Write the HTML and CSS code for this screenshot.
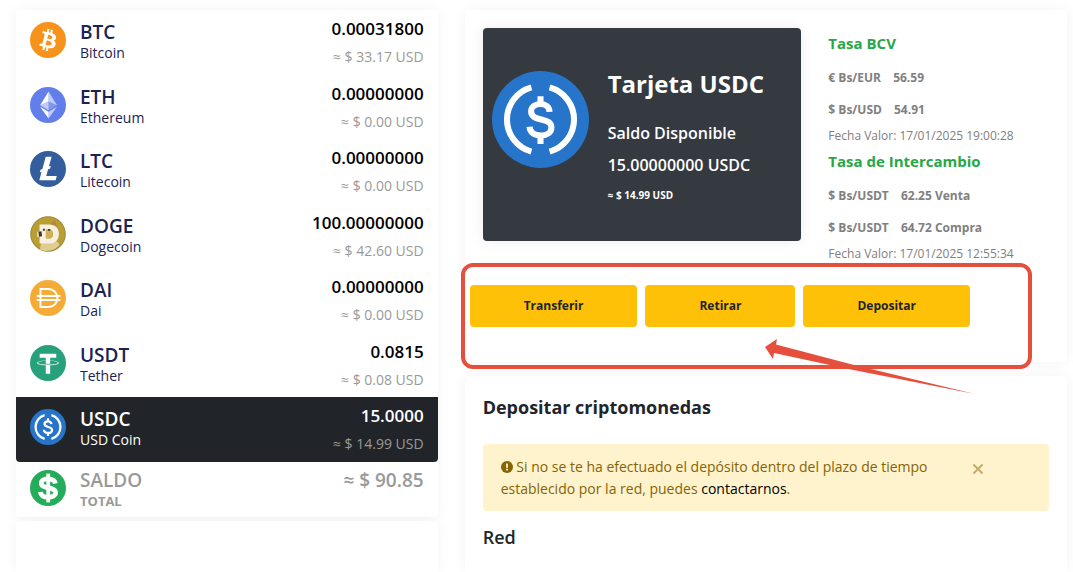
FILE: index.html
```html
<!DOCTYPE html>
<html lang="es">
<head>
  <meta charset="UTF-8" />
  <meta name="viewport" content="width=device-width, initial-scale=1" />
  <title>Billetera - USDC</title>
  <link rel="stylesheet" href="styles.css">
</head>
<body>
  <!-- shared USDC logo -->
  <svg class="sprite" aria-hidden="true">
    <symbol id="usdc" viewBox="0 0 32 32">
      <circle cx="16" cy="16" r="16" fill="#2775ca"/>
      <g fill="none" stroke="#fff" stroke-width="2">
        <path d="M13 5.4a11 11 0 0 0 0 21.2M19 5.4a11 11 0 0 1 0 21.2"/>
        <path d="M19 13.5c-.1-1.700-1.300-2.600-3-2.600s-3.100.9-3.100 2.500c0 3.500 6.700 1.700 6.700 5.200 0 1.700-1.500 2.700-3.500 2.700s-3.600-1-3.700-2.900M16 8.300v2.500M16 21.400v2.700"/>
      </g>
    </symbol>
  </svg>

  <main class="page">
    <div class="column">
      <section class="card wallet" aria-label="Saldos">
        <ul class="coins">
          <li>
            <a href="#" class="coin">
              <svg class="coin-icon" viewBox="0 0 32 32" aria-hidden="true">
                <circle cx="16" cy="16" r="16" fill="#f7931a"/>
                <path fill="#fff" fill-rule="evenodd" d="M23.189 14.02c.314-2.096-1.283-3.223-3.465-3.975l.708-2.840-1.728-.43-.69 2.765c-.454-.114-.92-.22-1.385-.326l.695-2.783L15.596 6l-.708 2.839c-.376-.086-.746-.17-1.104-.26l.002-.009-2.384-.595-.46 1.846s1.283.294 1.256.312c.7.175.826.638.805 1.006l-.806 3.235c.048.012.11.03.18.057l-.183-.045-1.130 4.532c-.086.212-.303.531-.793.41.018.025-1.256-.313-1.256-.313l-.858 1.978 2.250.561c.418.105.828.215 1.231.318l-.715 2.872 1.727.43.708-2.840c.472.127.93.245 1.378.357l-.706 2.828 1.728.43.715-2.866c2.948.558 5.164.333 6.097-2.333.752-2.146-.037-3.385-1.588-4.192 1.130-.26 1.980-1.003 2.207-2.538zm-3.950 5.538c-.533 2.147-4.148.986-5.320.695l.95-3.805c1.172.293 4.929.872 4.370 3.110zm.535-5.569c-.487 1.953-3.495.96-4.470.717l.86-3.450c.975.243 4.118.696 3.610 2.733z"/>
              </svg>
              <span class="coin-name"><strong>BTC</strong><span>Bitcoin</span></span>
              <span class="coin-value"><strong>0.00031800</strong><span>≈ $ 33.17 USD</span></span>
            </a>
          </li>
          <li>
            <a href="#" class="coin">
              <svg class="coin-icon" viewBox="0 0 32 32" aria-hidden="true">
                <circle cx="16" cy="16" r="16" fill="#627eea"/>
                <g fill="#fff">
                  <path fill-opacity=".6" d="M16.500 4v8.870l7.500 3.350z"/>
                  <path d="M16.500 4L9 16.220l7.500-3.350z"/>
                  <path fill-opacity=".6" d="M16.500 21.970V28L24 17.620z"/>
                  <path d="M16.500 28v-6.030L9 17.620z"/>
                  <path fill-opacity=".2" d="M16.500 20.570l7.500-4.350-7.500-3.350z"/>
                  <path fill-opacity=".6" d="M9 16.220l7.500 4.350v-7.700z"/>
                </g>
              </svg>
              <span class="coin-name"><strong>ETH</strong><span>Ethereum</span></span>
              <span class="coin-value"><strong>0.00000000</strong><span>≈ $ 0.00 USD</span></span>
            </a>
          </li>
          <li>
            <a href="#" class="coin">
              <svg class="coin-icon" viewBox="0 0 32 32" aria-hidden="true">
                <circle cx="16" cy="16" r="16" fill="#345d9d"/>
                <path fill="#fff" d="M10.300 18.500l-1.600.6.7-2.500 1.600-.6L14 5.200h5.200l-2.400 8.600 1.700-.6-.7 2.500-1.700.6-1.700 5.900h9.400L22.800 26H8.300z"/>
              </svg>
              <span class="coin-name"><strong>LTC</strong><span>Litecoin</span></span>
              <span class="coin-value"><strong>0.00000000</strong><span>≈ $ 0.00 USD</span></span>
            </a>
          </li>
          <li>
            <a href="#" class="coin">
              <svg class="coin-icon" viewBox="0 0 32 32" aria-hidden="true">
                <circle cx="16" cy="16" r="15.300" fill="#b99f33" stroke="#a08a3c"/>
                <path fill="#e0cd92" d="M9 30c0-4 1-7 4-8h8c3 0 5 2 5 4a15 15 0 0 1-17 4z"/>
                <path fill="#b9853f" d="M18 7l4-4 2 6 1 5-5-4z"/>
                <path fill="#cdb353" d="M10 9h10v14H10z"/>
                <path fill="#f6efe2" fill-rule="evenodd" d="M8.500 7.500H17c5.500 0 8.700 3.300 8.700 8.500s-3.200 8.500-8.700 8.500H8.500v-6h-2v-4.500h2zm5.500 4.300v8.400h2.500c3 0 4-1.700 4-4.200s-1-4.200-4-4.200z"/>
                <path fill="#3f3524" d="M7.500 14l2.700-.5.5 4.500-2.700.5zM11.500 11.300h1.700v1.700h-1.700zM16 11.500h2v1.700h-2z"/>
              </svg>
              <span class="coin-name"><strong>DOGE</strong><span>Dogecoin</span></span>
              <span class="coin-value"><strong>100.00000000</strong><span>≈ $ 42.60 USD</span></span>
            </a>
          </li>
          <li>
            <a href="#" class="coin">
              <svg class="coin-icon" viewBox="0 0 32 32" aria-hidden="true">
                <circle cx="16" cy="16" r="16" fill="#f5ac37"/>
                <path fill="none" stroke="#fff" stroke-width="1.700" d="M9.300 8h6.500c5.500 0 8.500 3.600 8.500 8s-3 8-8.500 8H9.300zM6 14.200h21M6 17.800h21"/>
              </svg>
              <span class="coin-name"><strong>DAI</strong><span>Dai</span></span>
              <span class="coin-value"><strong>0.00000000</strong><span>≈ $ 0.00 USD</span></span>
            </a>
          </li>
          <li>
            <a href="#" class="coin">
              <svg class="coin-icon" viewBox="0 0 32 32" aria-hidden="true">
                <circle cx="16" cy="16" r="16" fill="#26a17b"/>
                <path fill="#fff" d="M17.922 17.383v-.002c-.11.008-.677.042-1.942.042-1.010 0-1.721-.03-1.971-.042v.003c-3.888-.171-6.790-.848-6.790-1.658 0-.809 2.902-1.486 6.790-1.660v2.644c.254.018.982.061 1.988.061 1.207 0 1.812-.05 1.925-.06v-2.643c3.880.173 6.775.85 6.775 1.658 0 .81-2.895 1.485-6.775 1.657m0-3.590v-2.366h5.414V7.819H8.595v3.608h5.414v2.365c-4.400.202-7.709 1.074-7.709 2.118 0 1.044 3.309 1.915 7.709 2.118v7.582h3.913v-7.584c4.393-.202 7.694-1.073 7.694-2.116 0-1.043-3.301-1.914-7.694-2.117"/>
              </svg>
              <span class="coin-name"><strong>USDT</strong><span>Tether</span></span>
              <span class="coin-value"><strong>0.0815</strong><span>≈ $ 0.08 USD</span></span>
            </a>
          </li>
          <li>
            <a href="#" class="coin active" aria-current="true">
              <svg class="coin-icon" aria-hidden="true"><use href="#usdc"/></svg>
              <span class="coin-name"><strong>USDC</strong><span>USD Coin</span></span>
              <span class="coin-value"><strong>15.0000</strong><span>≈ $ 14.99 USD</span></span>
            </a>
          </li>
        </ul>
        <div class="total">
          <svg class="coin-icon" viewBox="0 0 32 32" aria-hidden="true">
            <circle cx="16" cy="16" r="16" fill="#23ad5b"/>
            <path fill="none" stroke="#fff" stroke-width="4.200" d="M22.600 12c-.5-2.600-3-4.100-6.600-4.100-3.500 0-6 1.400-6 3.900 0 5.600 12.800 2.500 12.800 8.300 0 2.600-2.700 4.100-6.500 4.100-4 0-6.700-1.700-7.100-4.700"/>
            <path stroke="#fff" stroke-width="3.400" d="M16.200 3.200v25.600"/>
          </svg>
          <span class="coin-name"><strong>SALDO</strong><b>TOTAL</b></span>
          <span class="total-value">≈ $ 90.85</span>
        </div>
      </section>
      <section class="card rest"></section>
    </div>

    <div class="column">
      <section class="card account">
        <div class="overview">
          <div class="usdc-card">
            <svg class="usdc-logo" aria-hidden="true"><use href="#usdc"/></svg>
            <div>
              <h1>Tarjeta USDC</h1>
              <p>Saldo Disponible</p>
              <p>15.00000000 USDC</p>
              <small>≈ $ 14.99 USD</small>
            </div>
          </div>
          <div class="rates">
            <h2>Tasa BCV</h2>
            <p>€ Bs/EUR <span>56.59</span></p>
            <p>$ Bs/USD <span>54.91</span></p>
            <small>Fecha Valor: 17/01/2025 19:00:28</small>
            <h2>Tasa de Intercambio</h2>
            <p>$ Bs/USDT <span>62.25 Venta</span></p>
            <p>$ Bs/USDT <span>64.72 Compra</span></p>
            <small>Fecha Valor: 17/01/2025 12:55:34</small>
          </div>
        </div>
        <div class="actions">
          <button type="button" class="btn">Transferir</button>
          <button type="button" class="btn">Retirar</button>
          <button type="button" class="btn">Depositar</button>
        </div>
        <div class="highlight"></div>
        <svg class="arrow" viewBox="0 0 212 56" aria-hidden="true">
          <path fill="#e54f3b" d="M0 8L12 0l-1 5.500 76 20L210 55 86 30.500 9 14l-1 6z"/>
        </svg>
      </section>

      <section class="card rest deposit">
        <h2>Depositar criptomonedas</h2>
        <div class="alert" role="alert">
          <p>
            <svg class="alert-icon" viewBox="0 0 12 12" aria-hidden="true">
              <circle cx="6" cy="6" r="6" fill="#856404"/>
              <path stroke="#fff3cd" stroke-width="1.800" d="M6 2.500v4.200M6 7.800v1.800"/>
            </svg>
            Si no se te ha efectuado el depósito dentro del plazo de tiempo establecido por la red, puedes <a href="#">contactarnos</a>.
          </p>
          <button type="button" class="close" aria-label="Cerrar">
            <svg viewBox="0 0 10 10" aria-hidden="true"><path stroke="#c2ad69" stroke-width="2" d="M.5.5l9 9M9.500.5l-9 9"/></svg>
          </button>
        </div>
        <h3>Red</h3>
      </section>
    </div>
  </main>
</body>
</html>
```
FILE: styles.css
```css
* {
  margin: 0;
  padding: 0;
  box-sizing: border-box;
}

body {
  font-family: 'Segoe UI', 'Open Sans', 'Noto Sans', sans-serif;
  font-size: 14px;
  background-color: #fff;
  color: #212529;
}

.sprite {
  display: none;
}

.page {
  display: grid;
  grid-template-columns: 7fr 10fr;
  gap: 27px;
  min-height: 100vh;
  padding: 10px 6px 0 16px;
}

.column {
  display: flex;
  flex-direction: column;
  gap: 14px;
}

.column:first-child {
  gap: 4px;
}

.card {
  background-color: #fff;
  border-radius: 4px;
  box-shadow: 0 0 14px rgba(0, 0, 0, 0.05);
}

.rest {
  flex-grow: 1;
  border-radius: 4px 4px 0 0;
}

/* Coin list */
.coins {
  display: grid;
  grid-auto-rows: 1fr;
  min-height: 452px;
  list-style: none;
}

.coin,
.total {
  display: flex;
  gap: 14px;
  height: 100%;
  padding: 12px 14px 0;
  color: #1b2254;
  text-decoration: none;
}

.coin.active {
  background-color: #212529;
  border-radius: 0 0 4px 4px;
  color: #fff;
}

.coin-icon {
  width: 36px;
  height: 36px;
  flex-shrink: 0;
}

.coin-name {
  display: flex;
  flex-direction: column;
  flex-grow: 1;
  line-height: 22px;
}

.coin-name strong {
  font-size: 19px;
  font-weight: 600;
  line-height: 20px;
}

.coin-name b {
  font-size: 13px;
}

.coin-value {
  display: flex;
  flex-direction: column;
  gap: 9px;
  margin-top: -2px;
  text-align: right;
}

.coin-value strong {
  color: #000;
  font-size: 17px;
  font-weight: 600;
  line-height: 18px;
}

.coin-value span {
  color: #999;
  line-height: 20px;
}

.active .coin-value strong {
  color: #fff;
}

.total {
  height: 55px;
  padding-top: 8px;
  color: #999;
}

.total-value {
  font-size: 19px;
  font-weight: 600;
  line-height: 20px;
}

/* Account */
.account {
  position: relative;
  padding: 18px 18px 35px;
}

.overview {
  display: grid;
  grid-template-columns: 13fr 9fr;
  gap: 27px;
  align-items: start;
}

.usdc-card {
  display: flex;
  gap: 19px;
  min-height: 213px;
  padding: 40px 9px 0;
  background-color: #343a40;
  border-radius: 4px;
  box-shadow: 0 0 14px rgba(0, 0, 0, 0.08);
  color: #fff;
}

.usdc-logo {
  width: 97px;
  height: 97px;
  margin-top: 3px;
  flex-shrink: 0;
}

.usdc-card h1 {
  margin-bottom: 17px;
  font-size: 24px;
  line-height: 32px;
  white-space: nowrap;
}

.usdc-card p {
  font-size: 16px;
  font-weight: 600;
  line-height: 32px;
}

.usdc-card small {
  display: block;
  font-size: 10px;
  font-weight: 700;
  line-height: 28px;
}

.rates {
  color: #808080;
}

.rates h2 {
  margin: 3px 0 7px;
  color: #28a745;
  font-size: 15px;
  line-height: 24px;
}

.rates p {
  font-size: 12px;
  font-weight: 700;
  line-height: 32px;
}

.rates p span {
  margin-left: 9px;
}

.rates small {
  display: block;
  font-size: 12px;
  line-height: 20px;
  white-space: nowrap;
}

.actions {
  display: flex;
  gap: 8px;
  margin: 21px 0 0 -13px;
}

.btn {
  padding: 0 54px;
  background-color: #ffc107;
  border: none;
  border-radius: 4px;
  color: #212529;
  font-family: inherit;
  font-size: 12px;
  font-weight: 700;
  line-height: 42px;
  cursor: pointer;
}

.btn:hover {
  background-color: #e0a800;
}

.highlight {
  position: absolute;
  top: 253px;
  left: -4px;
  right: 35px;
  height: 106px;
  border: 4px solid #e54f3b;
  border-radius: 12px;
  pointer-events: none;
}

.arrow {
  position: absolute;
  top: 329px;
  left: 300px;
  width: 212px;
  height: 56px;
  pointer-events: none;
}

/* Deposit */
.deposit {
  padding: 18px;
}

.deposit h2 {
  margin-bottom: 24px;
  font-size: 18px;
  line-height: 26px;
}

.alert {
  display: flex;
  gap: 32px;
  padding: 12px 18px 11px;
  margin-bottom: 13px;
  background-color: #fff3cd;
  border-radius: 4px;
  color: #856404;
}

.alert p {
  width: 440px;
  line-height: 22px;
}

.alert a {
  color: #000;
  text-decoration: none;
}

.alert-icon {
  width: 12px;
  height: 12px;
  vertical-align: -1px;
}

.close {
  height: 26px;
  background: none;
  border: none;
  cursor: pointer;
}

.close svg {
  width: 10px;
  height: 10px;
}

.deposit h3 {
  font-size: 18px;
  font-weight: 600;
  line-height: 26px;
}
```
